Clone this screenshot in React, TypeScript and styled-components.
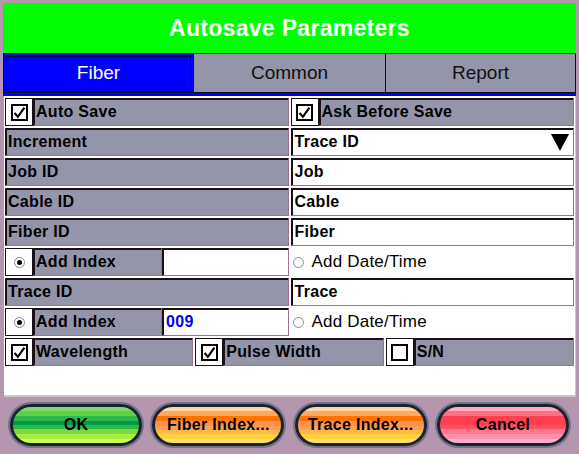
import styled, { createGlobalStyle } from "styled-components";

const GlobalStyle = createGlobalStyle`
  html, body {
    margin: 0;
    padding: 0;
    background: #b497ae;
    font-family: "Liberation Sans", Arial, sans-serif;
  }
  * { box-sizing: border-box; }
`;

type ToneProps = { tone: "green" | "orange" | "red" };
type ActiveProps = { active?: boolean };

const Frame = styled.div`
  width: 579px;
  height: 454px;
  padding: 3px 3px 0 3px;
  display: flex;
  flex-direction: column;
  background: #b497ae;
`;

const Header = styled.div`
  height: 50px;
  background: #00ff00;
  display: flex;
  align-items: center;
  justify-content: center;
  color: #fff;
  font-size: 23px;
  font-weight: bold;
  letter-spacing: 0.3px;
`;

const Tabs = styled.div`
  display: grid;
  grid-template-columns: 191px 192px 1fr;
  height: 43px;
  border-bottom: 3px solid #0000ff;
`;

const Tab = styled.div<ActiveProps>`
  position: relative;
  display: flex;
  align-items: center;
  justify-content: center;
  font-size: 19px;
  background: ${(p) => (p.active ? "#0000ff" : "#9595aa")};
  color: ${(p) => (p.active ? "#fff" : "#111")};
  border: 1px solid #111;
  border-left: ${(p) => (p.active ? "1px solid #111" : "none")};

  &::after {
    content: "";
    position: absolute;
    inset: 2px;
    border: ${(p) => (p.active ? "1px dotted #000" : "none")};
  }
`;

const Panel = styled.div`
  height: 301px;
  margin-left: 1px;
  background: #fff;
  padding: 2px 1px;
  display: flex;
  flex-direction: column;
  gap: 2px;
  border-bottom: 2px solid #c8c8c8;
  border-right: 1px solid #c8c8c8;
`;

const Row = styled.div<{ cols?: number }>`
  height: 28px;
  display: grid;
  grid-template-columns: repeat(${(p) => p.cols ?? 2}, 1fr);
  column-gap: 2px;
`;

const Group = styled.div`
  display: flex;
  min-width: 0;
`;

const Label = styled.div<{ w?: number }>`
  flex: ${(p) => (p.w ? `0 0 ${p.w}px` : "1")};
  background: #9595aa;
  border: 1px solid #1a1016;
  border-right-color: #a07090;
  border-bottom-color: #a07090;
  box-shadow: inset 1px 1px 0 #1a1016;
  display: flex;
  align-items: center;
  padding-left: 2px;
  font-size: 16px;
  font-weight: bold;
  letter-spacing: 0.3px;
  color: #000;
`;

const Field = styled.div<{ blue?: boolean }>`
  flex: 1;
  background: #fff;
  border: 1px solid #1a1016;
  border-right-color: #a07090;
  border-bottom-color: #a07090;
  box-shadow: inset 1px 1px 0 #1a1016;
  display: flex;
  align-items: center;
  justify-content: space-between;
  padding: 0 4px 0 3px;
  font-size: 16px;
  font-weight: bold;
  letter-spacing: 0.3px;
  color: ${(p) => (p.blue ? "#0000ff" : "#000")};
`;

const Arrow = styled.span`
  width: 0;
  height: 0;
  border-left: 9px solid transparent;
  border-right: 9px solid transparent;
  border-top: 17px solid #000;
`;

const BoxCell = styled.div`
  flex: 0 0 28px;
  background: #fff;
  border: 1px solid #1a1016;
  display: flex;
  align-items: center;
  justify-content: center;
`;

const CheckBox = styled.div`
  width: 17px;
  height: 17px;
  border: 2px solid #000;
  display: flex;
  align-items: center;
  justify-content: center;
`;

const Radio = styled.span<ActiveProps>`
  width: 11px;
  height: 11px;
  border-radius: 50%;
  border: 1px solid #8a8a8a;
  background: #fff;
  display: inline-flex;
  align-items: center;
  justify-content: center;

  &::after {
    content: "";
    width: 5px;
    height: 5px;
    border-radius: 50%;
    background: ${(p) => (p.active ? "#000" : "transparent")};
  }
`;

const Option = styled.div`
  display: flex;
  align-items: center;
  gap: 8px;
  padding-left: 2px;
  font-size: 17px;
  letter-spacing: 0.2px;
  color: #000;
`;

const Footer = styled.div`
  flex: 1;
  display: grid;
  grid-template-columns: repeat(4, 132px);
  justify-content: space-between;
  align-items: center;
  padding: 0 7px 2px 7px;
`;

const tones = {
  green:
    "linear-gradient(#7fd86a 0 12%, #5ed04a 12% 25%, #2cb84a 25% 38%, #009a48 38% 50%, #2fb848 50% 62%, #7ad840 62% 75%, #a8ee40 75% 88%, #c8ff50 88%)",
  orange:
    "linear-gradient(#ffd8a8 0 12%, #ffa860 12% 25%, #ff7400 25% 40%, #ff9050 40% 52%, #ffa050 52% 64%, #ffb848 64% 76%, #ffd040 76% 88%, #ffe060 88%)",
  red:
    "linear-gradient(#ffb0c0 0 12%, #ff7080 12% 25%, #ff4050 25% 50%, #ff5060 50% 62%, #ff7890 62% 76%, #ff90b0 76% 88%, #ffb0c8 88%)",
};

const Button = styled.button<ToneProps>`
  height: 42px;
  border-radius: 21px;
  border: 3px solid #1c2030;
  box-shadow: 0 0 0 2px #707488;
  background: ${(p) => tones[p.tone]};
  font-family: "Liberation Sans", Arial, sans-serif;
  font-size: 16px;
  font-weight: bold;
  letter-spacing: 0.3px;
  color: #000;
  padding: 0;
`;

const Check = () => (
  <svg width="13" height="13" viewBox="0 0 12 12">
    <path d="M1.5 6.5 L4.5 10 L10.5 1.5" fill="none" stroke="#000" strokeWidth="2" />
  </svg>
);

const CheckCell = ({ on }: { on: boolean }) => (
  <BoxCell>
    <CheckBox>{on && <Check />}</CheckBox>
  </BoxCell>
);

const App = () => {
  return (
    <>
      <GlobalStyle />
      <Frame>
        <Header>Autosave Parameters</Header>
        <Tabs>
          <Tab active>Fiber</Tab>
          <Tab>Common</Tab>
          <Tab>Report</Tab>
        </Tabs>
        <Panel>
          <Row>
            <Group>
              <CheckCell on />
              <Label>Auto Save</Label>
            </Group>
            <Group>
              <CheckCell on />
              <Label>Ask Before Save</Label>
            </Group>
          </Row>
          <Row>
            <Label>Increment</Label>
            <Field>
              Trace ID
              <Arrow />
            </Field>
          </Row>
          <Row>
            <Label>Job ID</Label>
            <Field>Job</Field>
          </Row>
          <Row>
            <Label>Cable ID</Label>
            <Field>Cable</Field>
          </Row>
          <Row>
            <Label>Fiber ID</Label>
            <Field>Fiber</Field>
          </Row>
          <Row>
            <Group>
              <BoxCell>
                <Radio active />
              </BoxCell>
              <Label w={129}>Add Index</Label>
              <Field />
            </Group>
            <Option>
              <Radio />
              Add Date/Time
            </Option>
          </Row>
          <Row>
            <Label>Trace ID</Label>
            <Field>Trace</Field>
          </Row>
          <Row>
            <Group>
              <BoxCell>
                <Radio active />
              </BoxCell>
              <Label w={129}>Add Index</Label>
              <Field blue>009</Field>
            </Group>
            <Option>
              <Radio />
              Add Date/Time
            </Option>
          </Row>
          <Row cols={3}>
            <Group>
              <CheckCell on />
              <Label>Wavelength</Label>
            </Group>
            <Group>
              <CheckCell on />
              <Label>Pulse Width</Label>
            </Group>
            <Group>
              <CheckCell on={false} />
              <Label>S/N</Label>
            </Group>
          </Row>
        </Panel>
        <Footer>
          <Button tone="green">OK</Button>
          <Button tone="orange">Fiber Index...</Button>
          <Button tone="orange">Trace Index...</Button>
          <Button tone="red">Cancel</Button>
        </Footer>
      </Frame>
    </>
  );
};

export default App;
